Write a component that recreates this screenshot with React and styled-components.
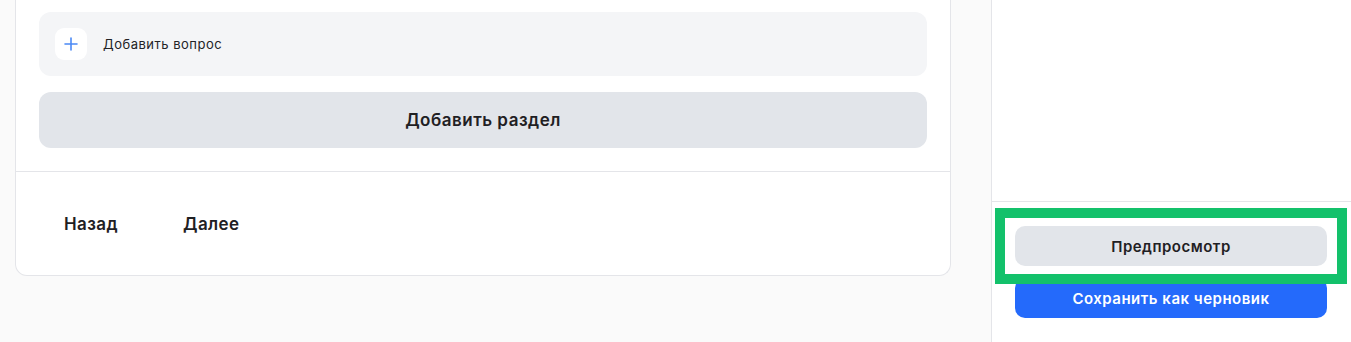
import React from "react";
import styled, { createGlobalStyle } from "styled-components";

const Global = createGlobalStyle`
  html, body { margin: 0; padding: 0; height: 100%; }
  body { font-family: Inter, "Noto Sans", "Liberation Sans", sans-serif; color: #1f2023; }
  #root { height: 100%; }
  * { box-sizing: border-box; }
`;

const Page = styled.div`
  display: flex;
  height: 100vh;
  overflow: hidden;
  background: #fafafa;
`;

const Main = styled.main`
  flex: 1;
  min-width: 0;
  padding: 0 40px 0 15px;
`;

const Card = styled.section`
  background: #ffffff;
  border: 1px solid #e4e5e9;
  border-top: none;
  border-radius: 0 0 12px 12px;
`;

const Body = styled.div`
  display: flex;
  flex-direction: column;
  gap: 16px;
  padding: 12px 23px 23px;
`;

const AddQuestion = styled.div`
  display: flex;
  align-items: center;
  gap: 16px;
  height: 64px;
  padding: 0 16px;
  background: #f4f5f7;
  border-radius: 12px;
  font-size: 13px;
  letter-spacing: 0.5px;
  color: #222326;
`;

const IconTile = styled.span`
  display: flex;
  align-items: center;
  justify-content: center;
  width: 32px;
  height: 32px;
  border-radius: 9px;
  background: #ffffff;
`;

const WideButton = styled.button`
  height: 56px;
  border: none;
  border-radius: 12px;
  background: #e2e5ea;
  font-family: inherit;
  font-size: 17px;
  font-weight: 600;
  letter-spacing: 0.5px;
  color: #1f2023;
`;

const Divider = styled.hr`
  margin: 0;
  border: none;
  border-top: 1px solid #e4e5e9;
`;

const Footer = styled.div`
  display: flex;
  align-items: center;
  gap: 17px;
  padding: 28px 24px 27px;
`;

const TextButton = styled.button`
  height: 48px;
  padding: 0 24px;
  border: none;
  background: transparent;
  font-family: inherit;
  font-size: 17px;
  font-weight: 600;
  letter-spacing: 0.4px;
  color: #1f2023;
`;

const Side = styled.aside`
  width: 360px;
  display: flex;
  flex-direction: column;
  background: #ffffff;
  border-left: 1px solid #e4e5e9;
`;

const SideFill = styled.div`
  flex: 1;
`;

const SideFooter = styled.div`
  display: flex;
  flex-direction: column;
  gap: 12px;
  padding: 24px 24px 24px 23px;
  border-top: 1px solid #e4e5e9;
`;

const ActionButton = styled.button`
  position: relative;
  height: 40px;
  border: none;
  border-radius: 10px;
  background: ${(p) => (p.$primary ? "#246afb" : "#e2e5ea")};
  color: ${(p) => (p.$primary ? "#ffffff" : "#1f2023")};
  font-family: inherit;
  font-size: 15px;
  font-weight: 600;
  letter-spacing: 0.5px;
`;

const Highlight = styled.span`
  position: absolute;
  top: -18px;
  bottom: -18px;
  left: -20px;
  right: -20px;
  border: 10px solid #13c16b;
  pointer-events: none;
  z-index: 1;
`;

const PlusIcon = () => (
  <svg width="14" height="14" viewBox="0 0 14 14" fill="none">
    <path d="M7 1v12M1 7h12" stroke="#4b89f5" strokeWidth="1.6" strokeLinecap="round" />
  </svg>
);

export default function App() {
  return (
    <>
      <Global />
      <Page>
        <Main>
          <Card>
            <Body>
              <AddQuestion>
                <IconTile>
                  <PlusIcon />
                </IconTile>
                Добавить вопрос
              </AddQuestion>
              <WideButton>Добавить раздел</WideButton>
            </Body>
            <Divider />
            <Footer>
              <TextButton>Назад</TextButton>
              <TextButton>Далее</TextButton>
            </Footer>
          </Card>
        </Main>
        <Side>
          <SideFill />
          <SideFooter>
            <ActionButton>
              Предпросмотр
              <Highlight />
            </ActionButton>
            <ActionButton $primary>Сохранить как черновик</ActionButton>
          </SideFooter>
        </Side>
      </Page>
    </>
  );
}
